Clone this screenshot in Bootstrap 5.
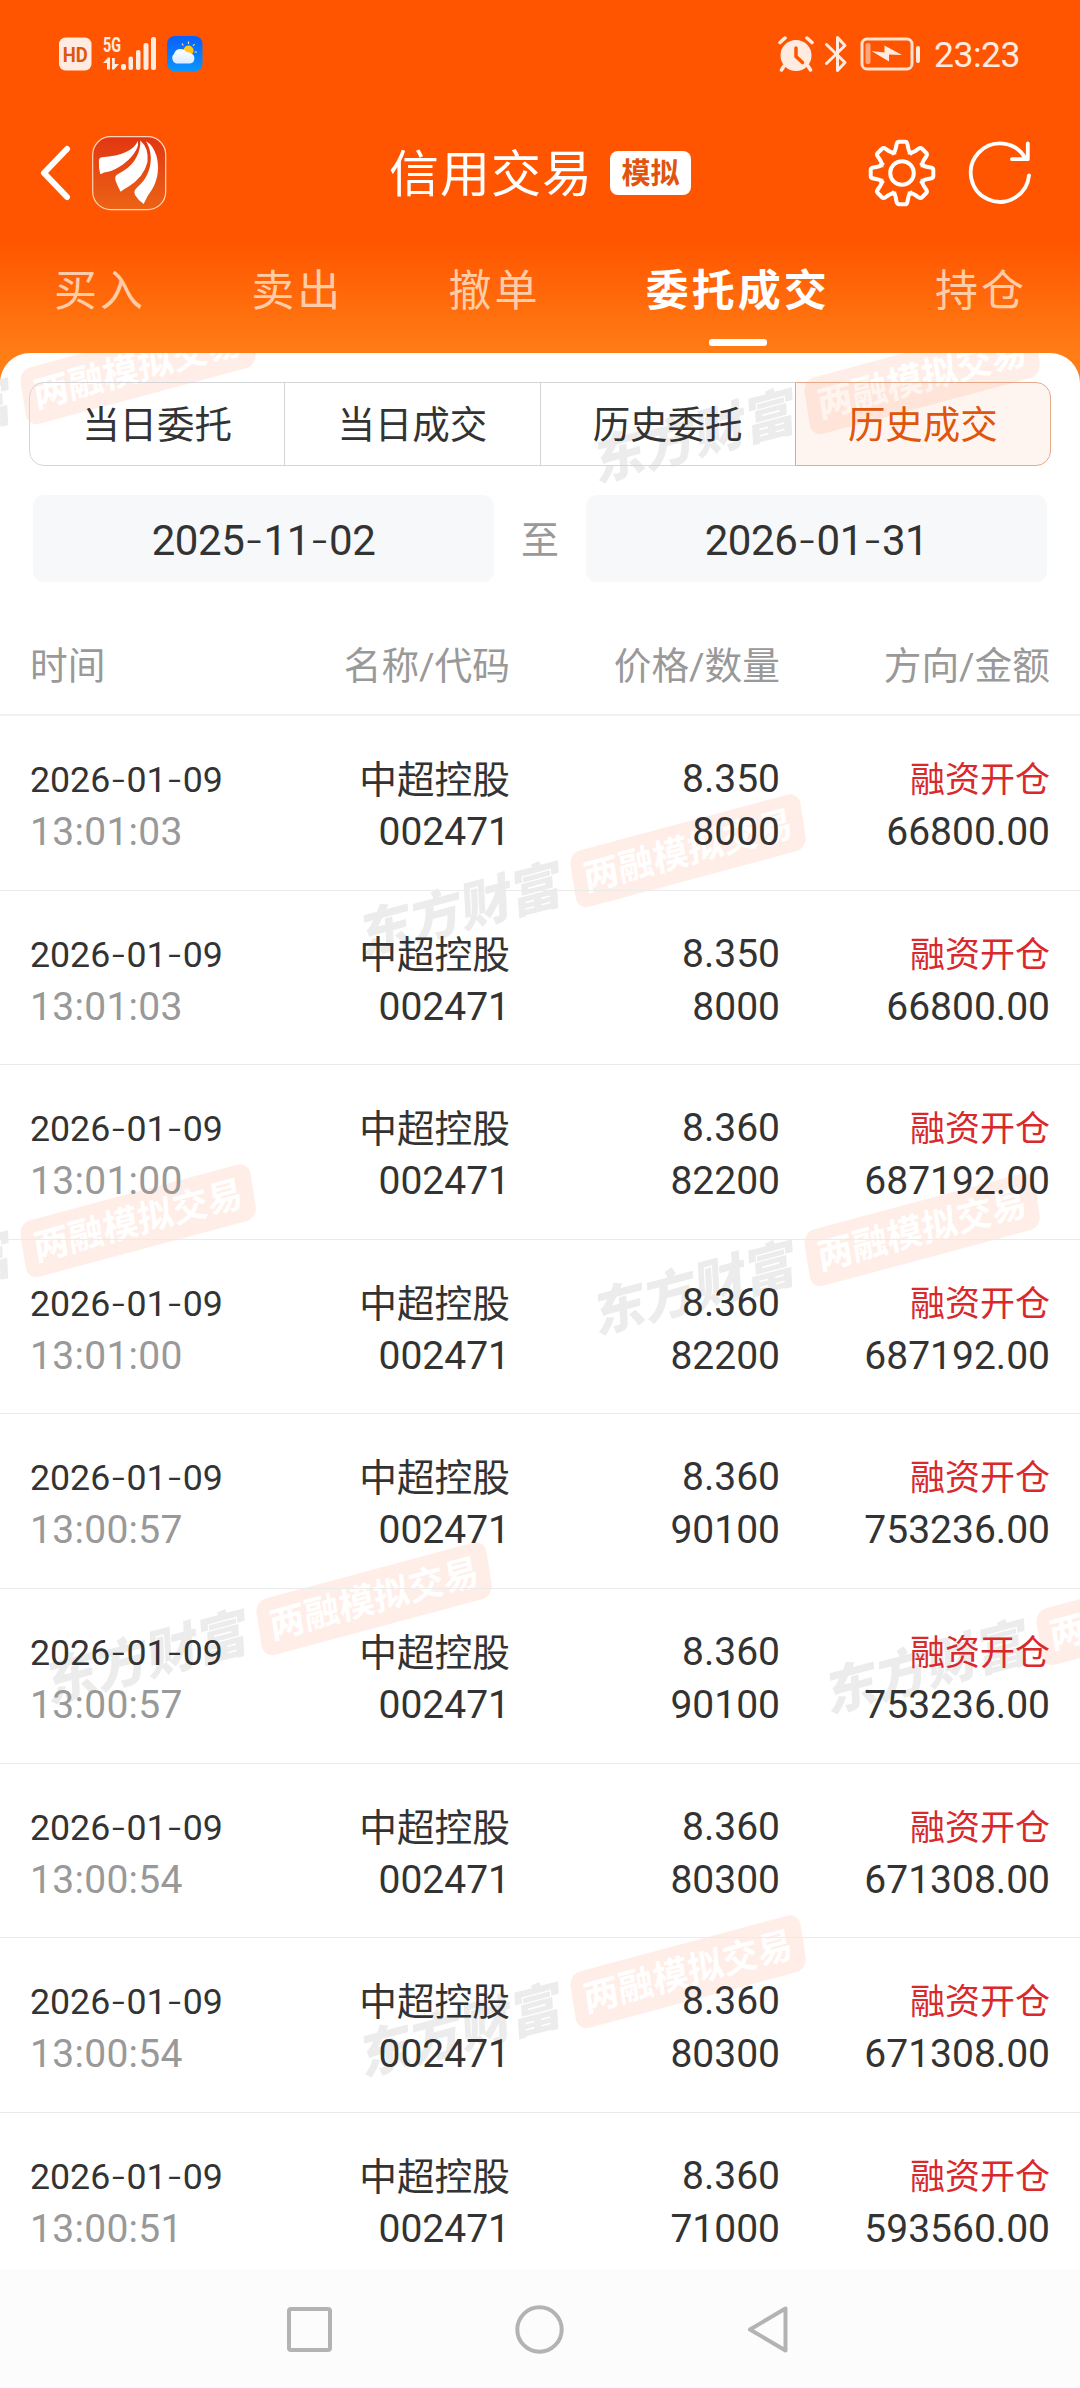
<!DOCTYPE html>
<html lang="zh-CN">
<head>
<meta charset="utf-8">
<meta name="viewport" content="width=device-width, initial-scale=1">
<title>信用交易</title>
<link href="https://cdn.jsdelivr.net/npm/bootstrap@5.3.0/dist/css/bootstrap.min.css" rel="stylesheet">
<style>
  body { font-family: Roboto, "Noto Sans CJK SC", sans-serif; color: #333; background: #fff; width: 1080px; height: 2388px; overflow: hidden; }
  svg { display: block; flex: none; }
  .top-area { background: linear-gradient(#ff5500 0, #ff5500 240px, #ff7d15 353px, #ff8018 385px); height: 385px; }
  .status-bar { height: 107px; padding: 0 60px 0 59px; color: #ffebe0; }
  .status-time { font-size: 35.5px; line-height: 40px; padding-top: 3px; margin-left: 12px; letter-spacing: -.5px; }
  .app-bar { height: 132px; color: #fff; }
  .app-title { font-size: 50px; line-height: 60px; letter-spacing: 1px; padding-top: 3px; }
  .sim-tag { width: 81px; height: 44px; border-radius: 8px; background: #fff; color: #e0540f; font-size: 29px; line-height: 46px; font-weight: 700; margin-left: 17px; }
  .trade-tabs { height: 114px; padding: 27px 53px 0 54px; color: #ffcca8; font-size: 43px; line-height: 50px; letter-spacing: 3px; }
  .trade-tabs .now { color: #fff; font-weight: 700; }
  .trade-tabs .now::after { content: ""; display: block; width: 58px; height: 7px; border-radius: 3px; background: #fff; margin: 23px auto 0; }
  .sheet { margin-top: -32px; height: 1917px; border-radius: 30px 30px 0 0; background: #fff; padding-top: 29px; overflow: hidden; z-index: 0; }
  .seg { margin: 0 29px; height: 84px; width: 1022px; }
  .seg .btn { --bs-btn-color: #333; --bs-btn-border-color: #d5d5d8; --bs-btn-active-bg: rgba(255,85,0,.06); --bs-btn-active-color: #e0560d; --bs-btn-active-border-color: #e5a98a; --bs-btn-border-radius: 15px; flex: 1 1 0; padding: 2px 0 0; font-size: 37.5px; line-height: 80px; }
  .dates { margin: 29px 33px 0; height: 87px; }
  .date-box { width: 461px; line-height: 90px; height: 87px; border-radius: 11px; background: #f7f8fa; font-size: 42px; letter-spacing: -.4px; }
  .hy { font-family: Inter, sans-serif; letter-spacing: 0; font-weight: 300; }
  .to-word { color: #999; font-size: 38px; line-height: 90px; }
  .list-head { padding-top: 35px; height: 134px; border-bottom: 2px solid #f1f1f1; color: #999; font-size: 37.7px; line-height: 99px; }
  .deal { height: 174.6px; border-bottom: 1px solid #ebebeb; padding-top: 37px; }
  .cell { padding: 0 30px; }
  .ln { height: 53px; line-height: 53px; font-size: 39px; white-space: nowrap; }
  .ln.day { font-size: 35.7px; }
  .ln.clk { color: #999; letter-spacing: .3px; }
  .ln.stock { font-size: 37.7px; line-height: 55px; }
  .ln.side { font-size: 35px; line-height: 55px; color: #d9292c; }
  .wm { position: absolute; z-index: -1; width: 0; height: 0; white-space: nowrap; }
  .wm-in { position: absolute; transform: rotate(-15deg) skewX(-6deg); left: 0; top: 0; }
  .wm-pill { position: absolute; left: -120px; top: -28.500px; width: 238px; height: 57px; border-radius: 12px; background: #ffeee7; color: #fff; font-weight: 700; font-size: 36px; line-height: 58px; text-align: center; letter-spacing: 0; }
  .wm-name { position: absolute; left: -340px; top: -32px; width: 210px; line-height: 64px; color: #ececec; font-size: 52px; font-weight: 900; transform: skewX(-6deg); text-align: center; }
  .sys-nav { height: 118px; background: #fcfcfc; padding: 0 291px 0 287px; }
</style>
<script src="https://cdn.jsdelivr.net/npm/bootstrap@5.3.0/dist/js/bootstrap.bundle.min.js"></script>
</head>
<body>
<header class="top-area">
  <div class="status-bar d-flex align-items-center justify-content-between">
    <div class="d-flex align-items-center">
      <svg width="33" height="34" viewBox="0 0 33 34"><rect width="32.500" height="33" y=".5" rx="6.500" fill="#ffebe0"/><text x="16.200" y="24.500" text-anchor="middle" font-family="Roboto" font-weight="700" font-size="20" textLength="25" lengthAdjust="spacingAndGlyphs" fill="#e0560d">HD</text></svg>
      <svg width="54" height="36" viewBox="0 0 54 36" style="margin-left:11px;overflow:visible" fill="#ffebe0"><text x="0" y="15.500" font-family="Roboto" font-weight="700" font-size="20.500" textLength="18" lengthAdjust="spacingAndGlyphs">5G</text><path d="M0 27l5-5.500h2V33.500H4V27zM16 28l-5 5.500H9V22h2.800v6z"/><rect x="18" y="28" width="5" height="6" rx="2"/><rect x="25.500" y="20.500" width="4.500" height="13.500" rx="2"/><rect x="33" y="14" width="4.500" height="20" rx="2"/><rect x="40.500" y="7" width="5" height="27" rx="2"/><rect x="48" y="1" width="5" height="33" rx="2"/></svg>
      <svg width="36" height="36" viewBox="0 0 36 36" style="margin-left:10px"><defs><linearGradient id="sky" x2="0" y2="1"><stop stop-color="#0a5ffb"/><stop offset="1" stop-color="#0a96ff"/></linearGradient><linearGradient id="cl" x2="0" y2="1"><stop stop-color="#fff"/><stop offset="1" stop-color="#d8ecff"/></linearGradient></defs><rect width="35.500" height="35.500" rx="8" fill="url(#sky)"/><path d="M21.500 5.500v2.500M15 7.500l1.300 2M27.500 8l-1.500 2M30 16h-2.500" stroke="#ffe08a" stroke-width="1.200"/><circle cx="21.500" cy="14.500" r="5" fill="#ffc81e"/><path d="M11 27.500a5.500 5.500 0 0 1-4-9.500a7 7 0 0 1 12.500-2a7 7 0 0 1 4.500 1.500a5.200 5.200 0 0 1-1 10z" fill="url(#cl)"/></svg>
    </div>
    <div class="d-flex align-items-center">
      <svg width="36" height="36" viewBox="0 0 36 36"><circle cx="18" cy="19.500" r="15.500" fill="#ffebe0"/><path d="M2 6.500l5-4.500M34 6.500L29 2M6 30l-2.500 4M30 30l2.500 4" stroke="#ffebe0" stroke-width="3.500" stroke-linecap="round"/><path d="M18 12v8.500l6.500 6" fill="none" stroke="#ff5500" stroke-width="3.500" stroke-linecap="round"/></svg>
      <svg width="24" height="38" viewBox="0 0 24 38" style="margin-left:10px"><path d="M2.500 9.500L21 27.500L13.500 35.500V2.500L21 10.500L2.500 28.500" fill="none" stroke="#ffebe0" stroke-width="3" stroke-linejoin="round" stroke-linecap="round"/></svg>
      <svg width="62" height="34" viewBox="0 0 62 34" style="margin-left:12px"><rect x="2" y="2" width="50" height="30" rx="5" fill="none" stroke="#ffe1d0" stroke-width="3"/><rect x="5.500" y="6" width="5" height="21" rx="2" fill="#ffa580"/><path d="M11.500 14l13 1.500V8.500L42 18l-13-.5v7z" fill="#ffebe0"/><rect x="56" y="9" width="4" height="17" rx="2" fill="#ffebe0"/></svg>
      <span class="status-time">23:23</span>
    </div>
  </div>
  <div class="app-bar row g-0 align-items-center">
    <div class="col-4 d-flex align-items-center" style="padding-left:39px">
      <svg width="32" height="56" viewBox="0 0 32 56"><path d="M28 4L5 28L28 52" fill="none" stroke="#fff" stroke-width="6" stroke-linecap="round" stroke-linejoin="round"/></svg>
      <svg width="75" height="75" viewBox="0 0 75 75" style="margin-left:21px"><defs><linearGradient id="lg" x2="0" y2="1"><stop stop-color="#e23612"/><stop offset="1" stop-color="#ec6315"/></linearGradient></defs><rect x=".7" y=".7" width="73" height="73" rx="18" fill="url(#lg)" stroke="#ffd5b8" stroke-width="1.200"/><g fill="#fff"><path d="M45.800 5C42 14 30 20 10 21.200Q7 21.500 6.900 25Q6.600 32 8.200 38Q9 38 12 36.500Q20 35.500 27 31C37 25.500 45 15 46 9z"/><path d="M48.300 4.500C49 15 43 28 32 34.500L24.500 39Q22.500 41 23.300 44Q25 49 28.600 55.700Q31 53.500 36 51Q52 41 55.500 26Q57 12 48.300 4.500z"/><path d="M54 5.300C60 15 60.500 28 55 39C51 47 46 50 43 54Q41.500 56 43 59Q46 64 51.600 68Q55 60 60 53.500C67 42 67 30 64.500 20Q61 9 54 5.300z"/></g></svg>
    </div>
    <div class="col-4 d-flex align-items-center justify-content-center">
      <span class="app-title text-nowrap">信用交易</span><span class="sim-tag text-center flex-shrink-0">模拟</span>
    </div>
    <div class="col-4 d-flex align-items-center justify-content-end" style="padding-right:47px">
      <svg width="68" height="68" viewBox="-34 -34 68 68" fill="none" stroke="#fff" stroke-width="4" stroke-linejoin="round"><defs><path id="tooth" d="M-10.500 -18.600L-8.500 -20.600Q-6.800 -21.500 -6.300 -24.500L-5.500 -28.500Q-5 -31.300 -3 -31.300H3Q5 -31.300 5.500 -28.500L6.300 -24.500Q6.800 -21.500 8.500 -20.600L10.500 -18.600"/></defs><use href="#tooth"/><use href="#tooth" transform="rotate(45)"/><use href="#tooth" transform="rotate(90)"/><use href="#tooth" transform="rotate(135)"/><use href="#tooth" transform="rotate(180)"/><use href="#tooth" transform="rotate(225)"/><use href="#tooth" transform="rotate(270)"/><use href="#tooth" transform="rotate(315)"/><circle r="11.800"/></svg>
      <svg width="66" height="66" viewBox="-33 -33 66 66" style="margin-left:31px" fill="none" stroke="#fff" stroke-width="3.800" stroke-linecap="round" stroke-linejoin="round"><path d="M29 2.500A29.200 29.200 0 1 1 25.500 -14.500M27.800 -29.500V-13.800H12"/></svg>
    </div>
  </div>
  <nav class="trade-tabs d-flex justify-content-between">
    <span>买入</span><span>卖出</span><span>撤单</span><span class="now">委托成交</span><span>持仓</span>
  </nav>
</header>

<main class="sheet position-relative">
  <div class="btn-group seg">
    <button class="btn">当日委托</button><button class="btn">当日成交</button><button class="btn">历史委托</button><button class="btn active">历史成交</button>
  </div>
  <div class="dates d-flex justify-content-between">
    <div class="date-box text-center">2025<span class="hy">-</span>11<span class="hy">-</span>02</div>
    <span class="to-word">至</span>
    <div class="date-box text-center">2026<span class="hy">-</span>01<span class="hy">-</span>31</div>
  </div>
  <div class="list-head row g-0">
    <div class="col-3 cell">时间</div><div class="col-3 cell text-end">名称/代码</div><div class="col-3 cell text-end">价格/数量</div><div class="col-3 cell text-end">方向/金额</div>
  </div>
  <div id="deals"></div>
</main>

<footer class="sys-nav d-flex align-items-center justify-content-between">
  <svg width="45" height="45" viewBox="0 0 45 45"><rect x="2" y="2" width="41" height="41" rx="2" fill="none" stroke="#b3b3b3" stroke-width="4"/></svg>
  <svg width="49" height="49" viewBox="0 0 49 49"><circle cx="24.500" cy="24.500" r="22.200" fill="none" stroke="#b3b3b3" stroke-width="4"/></svg>
  <svg width="42" height="49" viewBox="0 0 42 49"><path d="M38.500 3.500V45.500L3 24.500z" fill="none" stroke="#b3b3b3" stroke-width="4" stroke-linejoin="round"/></svg>
</footer>

<script>
  const deals = [
    ['13:01:03', '8.350', '8000', '66800.00'],
    ['13:01:03', '8.350', '8000', '66800.00'],
    ['13:01:00', '8.360', '82200', '687192.00'],
    ['13:01:00', '8.360', '82200', '687192.00'],
    ['13:00:57', '8.360', '90100', '753236.00'],
    ['13:00:57', '8.360', '90100', '753236.00'],
    ['13:00:54', '8.360', '80300', '671308.00'],
    ['13:00:54', '8.360', '80300', '671308.00'],
    ['13:00:51', '8.360', '71000', '593560.00']
  ];
  const day = '2026-01-09'.replace(/-/g, '<span class="hy">-</span>');
  document.getElementById('deals').innerHTML = deals.map(([t, p, q, a]) => `
    <div class="deal row g-0">
      <div class="col-3 cell"><div class="ln day">${day}</div><div class="ln clk">${t}</div></div>
      <div class="col-3 cell text-end"><div class="ln stock">中超控股</div><div class="ln">002471</div></div>
      <div class="col-3 cell text-end"><div class="ln">${p}</div><div class="ln">${q}</div></div>
      <div class="col-3 cell text-end"><div class="ln side">融资开仓</div><div class="ln">${a}</div></div>
    </div>`).join('');

  // watermark stamps: centre of each pill inside the sheet
  const marks = [[139, 14], [923, 24], [689, 497], [139, 867], [923, 876], [375, 1245], [1155, 1255], [689, 1618]];
  document.querySelector('.sheet').insertAdjacentHTML('beforeend', marks.map(([x, y]) =>
    `<div class="wm" style="left:${x}px;top:${y}px" aria-hidden="true"><div class="wm-in"><div class="wm-name">东方财富</div><div class="wm-pill">两融模拟交易</div></div></div>`).join(''));
</script>
</body>
</html>
